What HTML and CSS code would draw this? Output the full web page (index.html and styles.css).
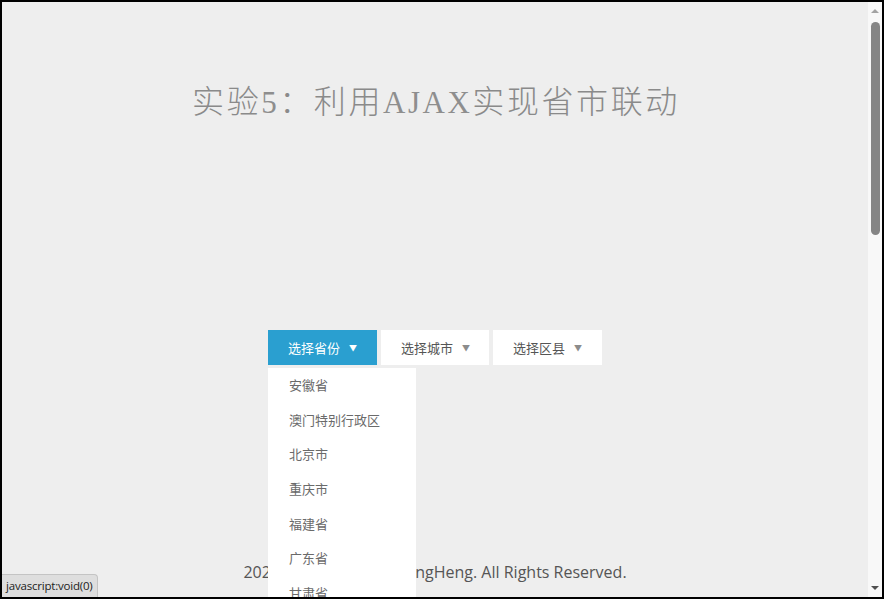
FILE: index.html
```html
<!DOCTYPE html>
<html lang="zh-CN">
<head>
<meta charset="utf-8">
<title>实验5：利用AJAX实现省市联动</title>
<link rel="stylesheet" href="styles.css">
</head>
<body>
<div class="frame">
  <div class="viewport">
    <h1 class="title">实验<span class="latin">5</span>：利用<span class="latin">AJAX</span>实现省市联动</h1>
    <div class="selects">
      <div class="select">
        <a class="select-btn active" href="javascript:void(0)">选择省份<span class="caret">▼</span></a>
        <ul class="menu">
          <li>安徽省</li>
          <li>澳门特别行政区</li>
          <li>北京市</li>
          <li>重庆市</li>
          <li>福建省</li>
          <li>广东省</li>
          <li>甘肃省</li>
          <li>广西壮族自治区</li>
        </ul>
      </div>
      <div class="select">
        <a class="select-btn" href="javascript:void(0)">选择城市<span class="caret">▼</span></a>
      </div>
      <div class="select">
        <a class="select-btn" href="javascript:void(0)">选择区县<span class="caret">▼</span></a>
      </div>
    </div>
    <footer class="footer">2024 - Copyright © ZhangHeng. All Rights Reserved.</footer>
    <div class="status">javascript:void(0)</div>
  </div>
  <div class="scrollbar">
    <span class="arrow up"></span>
    <span class="thumb"></span>
    <span class="arrow down"></span>
  </div>
</div>
</body>
</html>
```
FILE: styles.css
```css
* { box-sizing: border-box; }
html, body {
  margin: 0;
  padding: 0;
  width: 884px;
  height: 599px;
  overflow: hidden;
  background: #000;
}
.frame {
  width: 884px;
  height: 599px;
  border: 2px solid #000;
  display: flex;
  background: #eeeeee;
}
.viewport {
  position: relative;
  flex: 1;
  display: flex;
  flex-direction: column;
  align-items: center;
  overflow: hidden;
  background: #eeeeee;
}
.title {
  margin: 77px 0 0;
  height: 40px;
  line-height: 40px;
  font-family: "Noto Sans CJK SC", sans-serif;
  font-size: 32px;
  font-weight: 300;
  letter-spacing: 2.6px;
  color: #8a8a8a;
  padding-left: 2px;
}
.latin {
  font-family: "Liberation Serif", "Times New Roman", serif;
  font-size: 31px;
  font-weight: 400;
  letter-spacing: 2.5px;
  color: #8e8e8e;
}
.selects {
  margin-top: 211px;
  display: flex;
  gap: 4px;
  z-index: 2;
}
.select {
  position: relative;
}
.select-btn {
  display: flex;
  align-items: center;
  height: 35px;
  width: 108px;
  padding-left: 20px;
  background: #fff;
  color: #555;
  text-decoration: none;
  font-family: "Noto Sans CJK SC", sans-serif;
  font-size: 13px;
}
.select:first-child .select-btn,
.select:last-child .select-btn { width: 109px; }
.select-btn.active {
  background: #2a9fd0;
  color: #fff;
}
.caret {
  margin-left: 9px;
  font-size: 8px;
  color: #8c8c8c;
}
.select-btn.active .caret { color: #fff; }
.menu {
  position: absolute;
  top: 38px;
  left: 0;
  width: 148px;
  margin: 0;
  padding: 0;
  list-style: none;
  background: #fff;
}
.menu li {
  height: 34.7px;
  line-height: 34.7px;
  padding-left: 21px;
  font-family: "Noto Sans CJK SC", sans-serif;
  font-size: 13px;
  color: #6a6a6a;
}
.footer {
  margin-top: auto;
  margin-bottom: 14px;
  line-height: 22px;
  font-family: "Open Sans", "Noto Sans", sans-serif;
  font-size: 16px;
  color: #555;
}
.status {
  position: absolute;
  left: 0;
  bottom: 0;
  height: 23px;
  padding: 0 4px;
  line-height: 22px;
  background: #dedede;
  border: 1px solid #c4c4c4;
  border-left: 0;
  border-bottom: 0;
  border-top-right-radius: 4px;
  font-family: "Open Sans", "Noto Sans", sans-serif;
  font-size: 11.5px;
  letter-spacing: -0.2px;
  color: #222;
  z-index: 3;
}
.scrollbar {
  position: relative;
  width: 14px;
  background: #f8f8f8;
  display: flex;
  flex-direction: column;
  align-items: center;
}
.arrow {
  width: 0;
  height: 0;
  border-left: 4px solid transparent;
  border-right: 4px solid transparent;
}
.arrow.up {
  margin-top: 7px;
  border-bottom: 4px solid #a3a3a3;
}
.arrow.down {
  margin-top: auto;
  margin-bottom: 7px;
  border-top: 4px solid #505050;
}
.thumb {
  margin-top: 9px;
  width: 9px;
  height: 213px;
  border-radius: 5px;
  background: #858585;
}
```
